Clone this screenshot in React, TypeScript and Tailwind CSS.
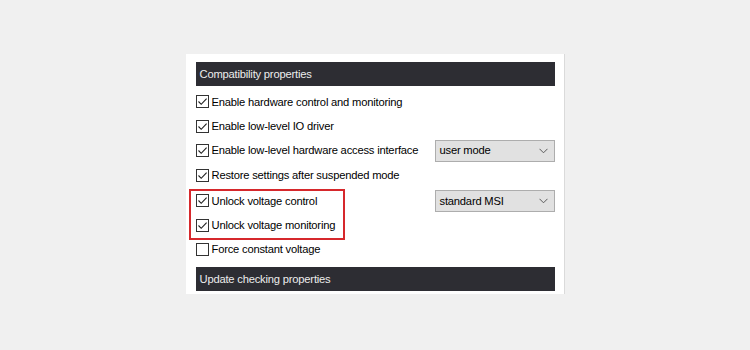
import React from 'react';

function Check({ checked }: { checked: boolean }) {
  return (
    <span className="flex h-[13px] w-[13px] shrink-0 items-center justify-center border border-[#333333] bg-white">
      {checked && (
        <svg width="11" height="11" viewBox="0 0 11 11" fill="none">
          <path d="M1.5 5.5 L4.2 8.3 L9.6 2.6" stroke="#1f1f1f" strokeWidth="1.1" />
        </svg>
      )}
    </span>
  );
}

function Select({ value }: { value: string }) {
  return (
    <div className="flex h-[22px] w-[120px] items-center justify-between border border-[#adadad] bg-[#e1e1e1] pl-[4px] pr-[6px]">
      <span>{value}</span>
      <svg width="9" height="6" viewBox="0 0 9 6" fill="none">
        <path d="M0.5 0.8 L4.5 4.8 L8.5 0.8" stroke="#5a5a5a" strokeWidth="1" />
      </svg>
    </div>
  );
}

function Row({ label, checked, h, select }: { label: string; checked: boolean; h: string; select?: string }) {
  return (
    <div className={`flex items-center ${h}`}>
      <div className="flex flex-1 items-center gap-[3px] whitespace-nowrap">
        <Check checked={checked} />
        <span>{label}</span>
      </div>
      {select && <Select value={select} />}
    </div>
  );
}

function Header({ title }: { title: string }) {
  return (
    <div className="flex h-[24px] items-center bg-[#2d2d33] px-[4px] text-[#ececec]">{title}</div>
  );
}

export default function App() {
  return (
    <div
      className="flex h-[350px] w-[750px] justify-center bg-[#f0f0f0] pt-[54px] text-[11.2px] tracking-[-0.2px] text-black"
      style={{ fontFamily: '"Liberation Sans", Arial, sans-serif' }}
    >
      <div className="flex h-[240px] w-[379px] flex-col border-r border-[#dadada] bg-white pt-[8px] pl-[10px] pr-[9px]">
        <Header title="Compatibility properties" />
        <div className="flex flex-col pt-[3.5px]">
          <Row h="h-[25px]" checked label="Enable hardware control and monitoring" />
          <Row h="h-[24px]" checked label="Enable low-level IO driver" />
          <Row h="h-[24px]" checked label="Enable low-level hardware access interface" select="user mode" />
          <Row h="h-[26px]" checked label="Restore settings after suspended mode" />
          <div className="relative">
            <Row h="h-[25px]" checked label="Unlock voltage control" select="standard MSI" />
            <Row h="h-[24px]" checked label="Unlock voltage monitoring" />
            <div className="pointer-events-none absolute -left-[7px] top-0 h-[51px] w-[156px] border-2 border-[#d6282c]" />
          </div>
          <Row h="h-[24px]" label="Force constant voltage" checked={false} />
        </div>
        <div className="mt-[5.5px]">
          <Header title="Update checking properties" />
        </div>
      </div>
    </div>
  );
}
